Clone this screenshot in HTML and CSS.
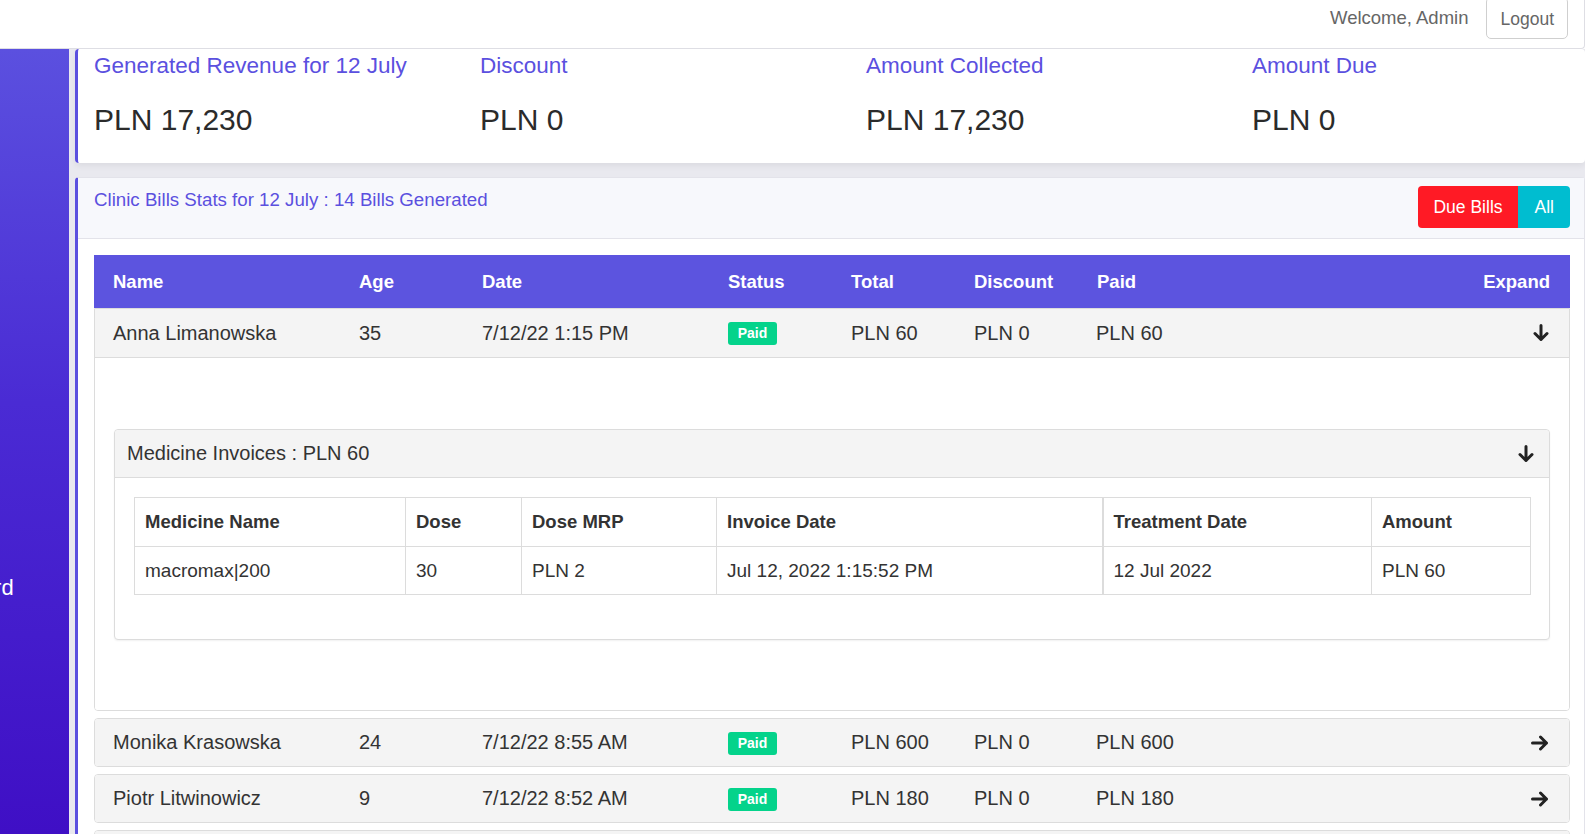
FILE: index.html
```html
<!DOCTYPE html>
<html>
<head>
<meta charset="utf-8">
<title>Clinic Bills</title>
<link rel="stylesheet" href="styles.css">
</head>
<body>
<header class="topbar">
  <span class="welcome">Welcome, Admin</span>
  <button class="logout">Logout</button>
</header>
<div class="layout">
  <aside class="sidebar">
    <div class="nav-item">Dashboard</div>
  </aside>
  <main class="main">
    <section class="stats-card">
      <div class="stat">
        <div class="stat-label">Generated Revenue for 12 July</div>
        <div class="stat-value">PLN 17,230</div>
      </div>
      <div class="stat">
        <div class="stat-label">Discount</div>
        <div class="stat-value">PLN 0</div>
      </div>
      <div class="stat">
        <div class="stat-label">Amount Collected</div>
        <div class="stat-value">PLN 17,230</div>
      </div>
      <div class="stat">
        <div class="stat-label">Amount Due</div>
        <div class="stat-value">PLN 0</div>
      </div>
    </section>

    <section class="bills-card">
      <div class="bills-head">
        <div class="bills-title">Clinic Bills Stats for 12 July : 14 Bills Generated</div>
        <div class="btn-group">
          <button class="btn btn-red">Due Bills</button>
          <button class="btn btn-cyan">All</button>
        </div>
      </div>
      <div class="bills-body">
        <div class="grid-row table-head">
          <div class="cell">Name</div>
          <div class="cell">Age</div>
          <div class="cell">Date</div>
          <div class="cell">Status</div>
          <div class="cell">Total</div>
          <div class="cell">Discount</div>
          <div class="cell">Paid</div>
          <div class="cell cell-end">Expand</div>
        </div>

        <div class="bill bill-open">
          <div class="grid-row bill-row">
            <div class="cell">Anna Limanowska</div>
            <div class="cell">35</div>
            <div class="cell">7/12/22 1:15 PM</div>
            <div class="cell"><span class="badge">Paid</span></div>
            <div class="cell">PLN 60</div>
            <div class="cell">PLN 0</div>
            <div class="cell">PLN 60</div>
            <div class="cell cell-end">
              <svg class="arrow" width="16" height="18" viewBox="0 0 16 18"><path d="M8 1.5V15.5M2 9.5L8 15.5L14 9.5" fill="none" stroke="#222" stroke-width="3" stroke-linecap="round" stroke-linejoin="round"/></svg>
            </div>
          </div>
          <div class="bill-detail">
            <div class="inv-card">
              <div class="inv-head">
                <span>Medicine Invoices : PLN 60</span>
                <svg class="arrow" width="16" height="18" viewBox="0 0 16 18"><path d="M8 1.5V15.5M2 9.5L8 15.5L14 9.5" fill="none" stroke="#222" stroke-width="3" stroke-linecap="round" stroke-linejoin="round"/></svg>
              </div>
              <div class="inv-body">
                <table class="inv-table">
                  <colgroup>
                    <col class="c1"><col class="c2"><col class="c3"><col class="c4"><col class="c5"><col class="c6">
                  </colgroup>
                  <thead>
                    <tr><th>Medicine Name</th><th>Dose</th><th>Dose MRP</th><th>Invoice Date</th><th class="thick">Treatment Date</th><th>Amount</th></tr>
                  </thead>
                  <tbody>
                    <tr><td>macromax|200</td><td>30</td><td>PLN 2</td><td>Jul 12, 2022 1:15:52 PM</td><td class="thick">12 Jul 2022</td><td>PLN 60</td></tr>
                  </tbody>
                </table>
              </div>
            </div>
          </div>
        </div>

        <div class="bill">
          <div class="grid-row bill-row short">
            <div class="cell">Monika Krasowska</div>
            <div class="cell">24</div>
            <div class="cell">7/12/22 8:55 AM</div>
            <div class="cell"><span class="badge">Paid</span></div>
            <div class="cell">PLN 600</div>
            <div class="cell">PLN 0</div>
            <div class="cell">PLN 600</div>
            <div class="cell cell-end">
              <svg class="arrow" width="18" height="16" viewBox="0 0 18 16"><path d="M1.5 8H15.5M9.5 2L15.5 8L9.5 14" fill="none" stroke="#222" stroke-width="3" stroke-linecap="round" stroke-linejoin="round"/></svg>
            </div>
          </div>
        </div>

        <div class="bill">
          <div class="grid-row bill-row short">
            <div class="cell">Piotr Litwinowicz</div>
            <div class="cell">9</div>
            <div class="cell">7/12/22 8:52 AM</div>
            <div class="cell"><span class="badge">Paid</span></div>
            <div class="cell">PLN 180</div>
            <div class="cell">PLN 0</div>
            <div class="cell">PLN 180</div>
            <div class="cell cell-end">
              <svg class="arrow" width="18" height="16" viewBox="0 0 18 16"><path d="M1.5 8H15.5M9.5 2L15.5 8L9.5 14" fill="none" stroke="#222" stroke-width="3" stroke-linecap="round" stroke-linejoin="round"/></svg>
            </div>
          </div>
        </div>

        <div class="bill">
          <div class="grid-row bill-row short"></div>
        </div>
      </div>
    </section>
  </main>
</div>
</body>
</html>
```

FILE: styles.css
```css
* { box-sizing: border-box; }

html, body {
  margin: 0;
  padding: 0;
  height: 834px;
  overflow: hidden;
  background: #ffffff;
  font-family: "Liberation Sans", Arial, sans-serif;
  color: #333;
}

.topbar {
  width: 1585px;
  height: 49px;
  display: flex;
  justify-content: flex-end;
  align-items: flex-start;
  background: #fff;
  border-right: 1px solid #dedee4;
  border-bottom: 1px solid #dedee4;
  border-bottom-right-radius: 4px;
}

.welcome {
  font-size: 18.5px;
  line-height: 22px;
  color: #666;
  margin-top: 7px;
}

.logout {
  margin: -3px 16px 0 18px;
  height: 42px;
  padding: 3px 13px 0 13px;
  background: #fff;
  border: 1px solid #cfcfcf;
  border-radius: 5px;
  font-family: inherit;
  font-size: 17.5px;
  color: #666;
}

.layout {
  display: flex;
  height: 785px;
}

.sidebar {
  width: 69px;
  flex: none;
  overflow: hidden;
  background: linear-gradient(180deg, #5b50df 0%, #4a2bd4 45%, #3f0fc5 100%);
  padding-top: 526px;
}

.nav-item {
  font-size: 22px;
  line-height: 26px;
  color: #fff;
  white-space: nowrap;
  margin-left: -94px;
}

.main {
  width: 1516px;
  flex: none;
  background: #e9e9ef;
  padding-left: 6px;
  overflow: hidden;
}

/* Stats card */
.stats-card {
  height: 114px;
  background: #fff;
  border-left: 3px solid #5b50df;
  border-radius: 4px;
  box-shadow: 0 3px 6px rgba(0, 0, 0, 0.06);
  padding: 4px 0 0 16px;
  display: grid;
  grid-template-columns: repeat(4, 386px);
}

.stat-label {
  font-size: 22.5px;
  line-height: 26px;
  color: #5b50df;
}

.stat-value {
  font-size: 30px;
  line-height: 36px;
  color: #2b2b2b;
  margin-top: 23px;
}

/* Bills card */
.bills-card {
  margin-top: 14px;
  background: #fff;
  border: 1px solid #e3e3ea;
  border-left: 3px solid #5b50df;
  border-radius: 4px;
  height: 700px;
}

.bills-head {
  display: flex;
  justify-content: space-between;
  align-items: flex-start;
  background: #f7f8fc;
  border-bottom: 1px solid #e3e3ea;
  padding: 8px 14px 10px 16px;
}

.bills-title {
  font-size: 18.7px;
  line-height: 22px;
  color: #5b50df;
  margin-top: 3px;
}

.btn-group {
  display: flex;
}

.btn {
  height: 42px;
  border: none;
  color: #fff;
  font-family: inherit;
  font-size: 17.5px;
  padding: 0 15px;
}

.btn-red {
  background: #ff1a25;
  border-radius: 4px 0 0 4px;
}

.btn-cyan {
  background: #00bdd0;
  border-radius: 0 4px 4px 0;
  padding: 0 16px 0 17px;
}

.bills-body {
  padding: 16px 14px 0 16px;
}

.grid-row {
  display: grid;
  grid-template-columns: 246px 123px 246px 123px 123px 123px 124px 1fr;
  align-items: center;
}

.cell {
  padding-left: 19px;
  white-space: nowrap;
}

.cell-end {
  text-align: right;
  padding-right: 20px;
  display: flex;
  justify-content: flex-end;
  align-items: center;
}

.table-head {
  height: 53px;
  background: #5c54df;
  color: #fff;
  font-weight: bold;
  font-size: 18.5px;
}

.bill {
  border: 1px solid #dcdcdc;
  border-radius: 4px;
  background: #fff;
  overflow: hidden;
}

.bill + .bill {
  margin-top: 7px;
}

.bill-open {
  border-top-left-radius: 0;
  border-top-right-radius: 0;
}

.bill-row {
  grid-template-columns: 245px 123px 246px 123px 123px 122px 124px 1fr;
  height: 49px;
  background: #f4f4f4;
  font-size: 20px;
  color: #333;
}

.bill-row .cell:first-child {
  padding-left: 18px;
}

.bill-open .bill-row {
  border-bottom: 1px solid #dcdcdc;
}

.bill-row.short {
  height: 47px;
}

.badge {
  display: inline-block;
  background: #04d38b;
  color: #fff;
  font-weight: bold;
  font-size: 14px;
  line-height: 23px;
  height: 23px;
  width: 49px;
  text-align: center;
  border-radius: 3px;
  vertical-align: middle;
}

.arrow {
  display: block;
}

.bill-detail {
  padding: 71px 19px 70px 19px;
  background: #fff;
}

.inv-card {
  border: 1px solid #dcdcdc;
  border-radius: 4px;
  box-shadow: 0 1px 2px rgba(0, 0, 0, 0.06);
  background: #fff;
}

.inv-head {
  height: 48px;
  background: #f4f4f4;
  border-bottom: 1px solid #dcdcdc;
  display: flex;
  align-items: center;
  justify-content: space-between;
  padding: 0 15px 0 12px;
  font-size: 20px;
  color: #333;
  border-radius: 4px 4px 0 0;
}

.inv-body {
  padding: 19px 19px 44px 19px;
}

.inv-table {
  width: 1396px;
  border-collapse: collapse;
  table-layout: fixed;
  font-size: 19px;
  color: #333;
}

.inv-table col.c1 { width: 271px; }
.inv-table col.c2 { width: 116px; }
.inv-table col.c3 { width: 195px; }
.inv-table col.c4 { width: 386px; }
.inv-table col.c5 { width: 269px; }
.inv-table col.c6 { width: 159px; }

.inv-table th,
.inv-table td {
  border: 1px solid #dcdcdc;
  text-align: left;
  padding: 0 10px;
  white-space: nowrap;
}

.inv-table th {
  height: 49px;
  font-weight: bold;
  font-size: 18.5px;
}

.inv-table td {
  height: 48px;
}

.inv-table .thick {
  border-left: 2px solid #dcdcdc;
}
```
